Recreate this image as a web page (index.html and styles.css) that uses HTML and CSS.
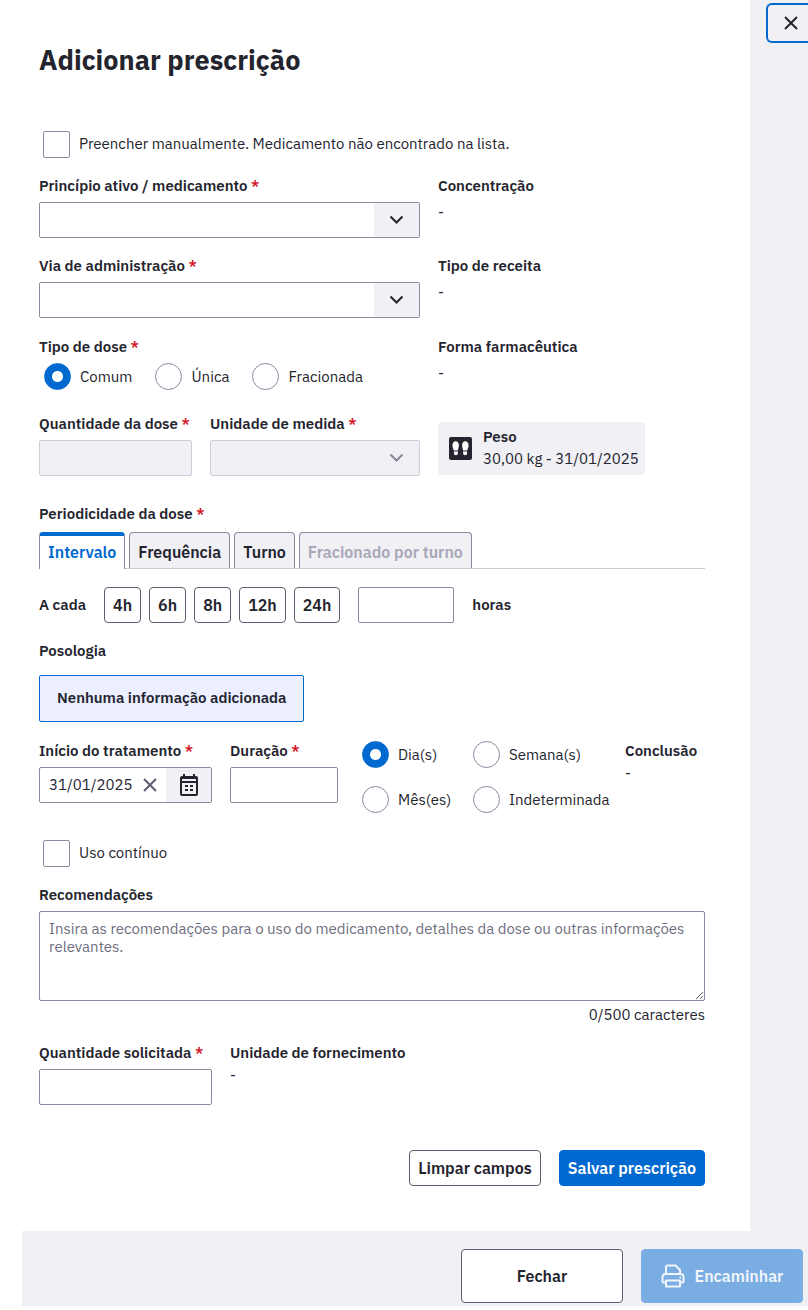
FILE: index.html
```html
<!DOCTYPE html>
<html lang="pt-BR">
<head>
<meta charset="utf-8">
<meta name="viewport" content="width=device-width, initial-scale=1">
<title>Adicionar prescrição</title>
<link rel="stylesheet" href="styles.css">
</head>
<body>
<div class="drawer">
  <div class="drawer-body">
    <main class="panel">
      <h1 class="title">Adicionar prescrição</h1>
      <form class="form">
        <label class="choice choice-check"><input class="check" type="checkbox">Preencher manualmente. Medicamento não encontrado na lista.</label>

        <div class="grid">
          <div class="field span-7">
            <label class="label" for="medicamento">Princípio ativo / medicamento <span class="req">*</span></label>
            <div class="select-box">
              <select class="control" id="medicamento"><option></option></select>
              <span class="chevron"><svg width="16" height="16" viewBox="0 0 16 16"><path d="M1.500 4.500l6 6 6-6"/></svg></span>
            </div>
          </div>
          <div class="info span-5"><span class="label">Concentração</span><span>-</span></div>
        </div>

        <div class="grid">
          <div class="field span-7">
            <label class="label" for="via">Via de administração <span class="req">*</span></label>
            <div class="select-box">
              <select class="control" id="via"><option></option></select>
              <span class="chevron"><svg width="16" height="16" viewBox="0 0 16 16"><path d="M1.500 4.500l6 6 6-6"/></svg></span>
            </div>
          </div>
          <div class="info span-5"><span class="label">Tipo de receita</span><span>-</span></div>
        </div>

        <div class="grid dose-kind">
          <fieldset class="field span-7">
            <legend class="label">Tipo de dose <span class="req">*</span></legend>
            <div class="dose-types">
              <label class="choice"><input class="radio" type="radio" name="dose" checked>Comum</label>
              <label class="choice"><input class="radio" type="radio" name="dose">Única</label>
              <label class="choice"><input class="radio" type="radio" name="dose">Fracionada</label>
            </div>
          </fieldset>
          <div class="info span-5"><span class="label">Forma farmacêutica</span><span>-</span></div>
        </div>

        <div class="grid dose-row">
          <div class="field span-3">
            <label class="label" for="qtd-dose">Quantidade da dose <span class="req">*</span></label>
            <input class="control" id="qtd-dose" type="text" disabled>
          </div>
          <div class="field span-4">
            <label class="label" for="unidade">Unidade de medida <span class="req">*</span></label>
            <div class="select-box">
              <select class="control" id="unidade" disabled><option></option></select>
              <span class="chevron chevron-off"><svg width="16" height="16" viewBox="0 0 16 16"><path d="M1.500 4.500l6 6 6-6"/></svg></span>
            </div>
          </div>
          <div class="span-5">
            <div class="weight">
              <svg width="23" height="23" viewBox="0 0 23 23">
                <rect width="23" height="23" rx="2" fill="#24242e"/>
                <g fill="#fff">
                  <path d="M6.700 4.200c2 0 3.300 1.700 3.200 4.300-.1 1.900-.7 3.200-1 5H4.800c-.3-1.600-1.300-2.800-1.400-4.700-.1-2.700 1.300-4.600 3.300-4.600zM4.900 14.500h4v1.600c0 1.500-.8 2.200-2 2.200s-2-.7-2-2.200z"/>
                  <path d="M16.300 4.200c-2 0-3.300 1.700-3.200 4.300.1 1.900.7 3.200 1 5h4.100c.3-1.600 1.300-2.800 1.400-4.700.1-2.700-1.300-4.600-3.300-4.600zM14.100 14.500h4v1.600c0 1.500-.8 2.200-2 2.200s-2-.7-2-2.200z"/>
                </g>
              </svg>
              <div class="weight-text"><strong>Peso</strong><span>30,00 kg - 31/01/2025</span></div>
            </div>
          </div>
        </div>

        <section class="period">
          <span class="label">Periodicidade da dose <span class="req">*</span></span>
          <div class="tabs" role="tablist">
            <button class="tab tab-active" type="button" role="tab" aria-selected="true">Intervalo</button>
            <button class="tab" type="button" role="tab">Frequência</button>
            <button class="tab" type="button" role="tab">Turno</button>
            <button class="tab" type="button" role="tab" disabled>Fracionado por turno</button>
          </div>
        </section>

        <div class="interval">
          <label class="label" for="horas">A cada</label>
          <div class="presets">
            <button class="btn" type="button">4h</button>
            <button class="btn" type="button">6h</button>
            <button class="btn" type="button">8h</button>
            <button class="btn" type="button">12h</button>
            <button class="btn" type="button">24h</button>
          </div>
          <input class="control hours" id="horas" type="text">
          <span class="label">horas</span>
        </div>

        <section class="posology">
          <span class="label">Posologia</span>
          <p class="notice">Nenhuma informação adicionada</p>
        </section>

        <div class="treatment">
          <div class="field">
            <label class="label" for="inicio">Início do tratamento <span class="req">*</span></label>
            <div class="control date">
              <input class="date-input" id="inicio" type="text" value="31/01/2025">
              <button class="date-clear" type="button" aria-label="Limpar data"><svg width="16" height="16" viewBox="0 0 16 16"><path d="M2 2l12 12M14 2L2 14" stroke="#5e5e70" stroke-width="2"/></svg></button>
              <button class="date-open" type="button" aria-label="Abrir calendário"><svg width="20" height="24" viewBox="0 0 20 24">
                <g fill="none" stroke="#24242e" stroke-width="2"><rect x="2" y="4" width="16" height="18" rx="1"/><path d="M2 9h16M5 1v3M15 1v3"/></g>
                <path d="M2 4h16v2H2zM6 12h3v2H6zM11 12h3v2h-3zM6 16h3v2H6zM11 16h3v2h-3z" fill="#24242e"/>
              </svg></button>
            </div>
          </div>
          <div class="field">
            <label class="label" for="duracao">Duração <span class="req">*</span></label>
            <input class="control" id="duracao" type="text">
          </div>
          <div class="units">
            <label class="choice"><input class="radio" type="radio" name="periodo" checked>Dia(s)</label>
            <label class="choice"><input class="radio" type="radio" name="periodo">Semana(s)</label>
            <label class="choice"><input class="radio" type="radio" name="periodo">Mês(es)</label>
            <label class="choice"><input class="radio" type="radio" name="periodo">Indeterminada</label>
          </div>
          <div class="info info-tight"><span class="label">Conclusão</span><span>-</span></div>
        </div>

        <label class="choice choice-check continuous"><input class="check" type="checkbox">Uso contínuo</label>

        <div class="field">
          <label class="label" for="recomendacoes">Recomendações</label>
          <textarea class="control notes" id="recomendacoes" placeholder="Insira as recomendações para o uso do medicamento, detalhes da dose ou outras informações relevantes."></textarea>
          <span class="counter">0/500 caracteres</span>
        </div>

        <div class="supply">
          <div class="field">
            <label class="label" for="qtd-solicitada">Quantidade solicitada <span class="req">*</span></label>
            <input class="control" id="qtd-solicitada" type="text">
          </div>
          <div class="info info-tight"><span class="label">Unidade de fornecimento</span><span>-</span></div>
        </div>

        <div class="actions">
          <button class="btn" type="reset">Limpar campos</button>
          <button class="btn btn-primary" type="button">Salvar prescrição</button>
        </div>
      </form>
    </main>
    <aside class="rail">
      <button class="close" type="button" aria-label="Fechar painel"><svg width="16" height="16" viewBox="0 0 16 16"><path d="M2 2l12 12M14 2L2 14" stroke="#24242e" stroke-width="2"/></svg></button>
    </aside>
  </div>
  <footer class="footer">
    <button class="btn btn-large" type="button">Fechar</button>
    <button class="btn btn-primary btn-large" type="button" disabled>
      <svg width="24" height="24" viewBox="0 0 24 24" fill="none" stroke="#f0f5fc" stroke-width="2" stroke-linejoin="round">
        <path d="M5 10V3Q5 1.500 6.500 1.500H14.500L19 6V10"/>
        <path d="M5 18.500H2.500Q1.500 18.500 1.500 17.500V13Q1.500 10 4.500 10H19.500Q22.500 10 22.500 13V17.500Q22.500 18.500 21.500 18.500H19"/>
        <path d="M5 16.500H19V22.500H5z"/><path d="M18.500 13.500h1.500"/>
      </svg>
      Encaminhar</button>
  </footer>
</div>
</body>
</html>
```

FILE: styles.css
```css
* { box-sizing: border-box; }

body {
  margin: 0;
  background: #fff;
  color: #24242e;
  font: 15px/20px "IBM Plex Sans", Roboto, "Noto Sans", sans-serif;
}

button, input, select, textarea { font: inherit; color: inherit; }
button { cursor: pointer; }
strong { font-weight: 600; }

.drawer { margin: 0 0 4px 22px; background: #f0f0f5; }
.drawer-body { display: flex; }
.panel { flex: 1; min-width: 0; padding: 42px 45px 45px 17px; background: #fff; }
.title { margin: 0 0 52px; font-size: 27px; line-height: 36px; font-weight: 700; }

.form { display: flex; flex-direction: column; gap: 18px; }
.grid { display: grid; grid-template-columns: repeat(12, minmax(0, 1fr)); gap: 18px; }
.span-3 { grid-column: span 3; }
.span-4 { grid-column: span 4; }
.span-5 { grid-column: span 5; }
.span-7 { grid-column: span 7; }

.field { display: flex; flex-direction: column; min-width: 0; margin: 0; padding: 0; border: 0; }
.label { padding: 0; font-weight: 600; white-space: nowrap; }
.field > .label { margin-bottom: 6px; }
.req { color: #d3182a; }
.info { display: flex; flex-direction: column; gap: 6px; }
.info-tight { gap: 2px; }

.control {
  width: 100%;
  height: 36px;
  padding: 0 9px;
  border: 1px solid #8a8aa0;
  border-radius: 2px;
  background: #fff;
  appearance: none;
}
.control:disabled { border-color: #cdcdd9; background: #f0f0f5; opacity: 1; }
.select-box { display: grid; align-items: center; }
.select-box > * { grid-area: 1 / 1; }
.chevron {
  display: grid;
  place-items: center;
  justify-self: end;
  width: 45px;
  height: 34px;
  margin-right: 1px;
  background: #f0f0f5;
  pointer-events: none;
}
.chevron path { fill: none; stroke: #24242e; stroke-width: 2; }
.chevron-off path { stroke: #8a8a96; }

.choice { display: flex; align-items: center; gap: 9px; white-space: nowrap; }
.choice-check { min-height: 28px; padding-left: 4px; }
.check, .radio {
  flex: none;
  width: 27px;
  height: 27px;
  margin: 0;
  border: 1px solid #8a8aa0;
  background: #fff;
  appearance: none;
}
.check { border-radius: 2px; }
.radio { border-radius: 50%; }
.radio:checked { border-color: #0069d0; background: radial-gradient(circle, #fff 5px, #0069d0 6px); }
.dose-types { display: flex; gap: 23px; padding-left: 5px; }

.dose-kind { margin-top: 1px; }
.dose-row { margin-top: 6px; }
.weight {
  display: inline-flex;
  align-items: center;
  gap: 11px;
  margin-top: 8px;
  padding: 4px 6px 5px 11px;
  border-radius: 4px;
  background: #f0f0f5;
}
.weight-text { display: flex; flex-direction: column; line-height: 22px; }

.period { display: flex; flex-direction: column; gap: 8px; margin-top: 10px; }
.tabs { display: flex; gap: 4px; border-bottom: 1px solid #cdcdd9; }
.tab {
  height: 36px;
  padding: 2px 8px 0;
  border: 1px solid #8a8aa0;
  border-bottom: 0;
  border-radius: 4px 4px 0 0;
  background: #f0f0f5;
  font-size: 16px;
  font-weight: 600;
}
.tab:disabled { color: #a8a8b8; }
.tab-active {
  height: 37px;
  margin-bottom: -1px;
  padding: 0 8px 2px;
  border-top: 4px solid #0069d0;
  background: #fff;
  color: #0069d0;
}

.interval { display: flex; align-items: center; gap: 18px; }
.presets { display: flex; gap: 8px; }
.hours { width: 96px; }
.btn {
  display: inline-flex;
  align-items: center;
  justify-content: center;
  gap: 10px;
  height: 36px;
  padding: 0 8px;
  border: 1px solid #5e5e70;
  border-radius: 4px;
  background: #fff;
  font-size: 16px;
  font-weight: 600;
  white-space: nowrap;
}
.btn-primary { border-color: #0069d0; background: #0069d0; color: #fff; }
.btn-primary:disabled { border-color: #7aade2; background: #7aade2; color: #f0f5fc; }
.btn-large { width: 162px; height: 54px; }

.posology { display: flex; flex-direction: column; align-items: flex-start; gap: 14px; }
.notice {
  margin: 0;
  padding: 12px 17px 13px;
  border: 1px solid #0069d0;
  border-radius: 2px;
  background: #ebefff;
  font-weight: 600;
}

.treatment {
  display: grid;
  grid-template-columns: minmax(0, 173fr) minmax(0, 108fr) minmax(0, 251fr) minmax(0, 80fr);
  gap: 18px;
  margin-top: 1px;
}
.date { display: flex; padding: 0 0 0 9px; }
.date-input { flex: 1; min-width: 0; padding: 0; border: 0; background: none; outline: 0; }
.date-clear, .date-open { display: grid; place-items: center; padding: 0; border: 0; background: none; }
.date-clear { width: 32px; }
.date-open { width: 45px; background: #f0f0f5; }
.units { display: grid; grid-template-columns: 93px auto; justify-content: start; align-content: start; gap: 18px; padding-left: 6px; }
.continuous { margin-top: 8px; }

.notes { height: 90px; padding: 8px 9px; line-height: 18px; resize: vertical; }
.notes::placeholder { color: #6e6e80; opacity: 1; }
.counter { margin-top: 4px; text-align: right; }
.supply { display: grid; grid-template-columns: 173fr 475fr; gap: 18px; }
.actions { display: flex; justify-content: flex-end; gap: 18px; margin-top: 27px; }

.rail { width: 58px; padding: 3px 0 0 16px; }
.close {
  display: flex;
  align-items: center;
  width: 100%;
  height: 40px;
  padding: 0 0 0 15px;
  border: 2px solid #0069d0;
  border-right: 0;
  border-radius: 6px 0 0 6px;
  background: none;
}
.footer { display: flex; justify-content: flex-end; gap: 18px; padding: 18px 5px 3px; }
```
